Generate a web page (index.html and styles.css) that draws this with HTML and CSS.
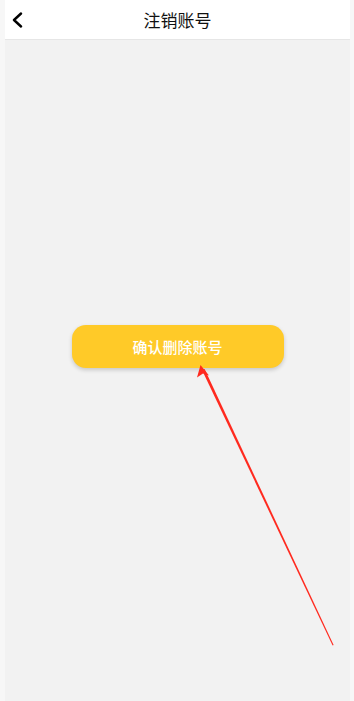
FILE: index.html
```html
<!DOCTYPE html>
<html lang="zh">
<head>
<meta charset="utf-8">
<link rel="stylesheet" href="styles.css">
</head>
<body>
<div class="frame">
  <header class="nav">
    <span class="back">
      <svg width="12" height="16" viewBox="0 0 12 16"><path d="M10 1.5 L3 8 L10 14.5" fill="none" stroke="#000" stroke-width="2.4" stroke-linecap="round" stroke-linejoin="round"/></svg>
    </span>
    <h1 class="title">注销账号</h1>
  </header>
  <main class="content">
    <button class="confirm">确认删除账号</button>
  </main>
  <svg class="arrow" width="354" height="701" viewBox="0 0 354 701">
    <polygon points="202,370 204.6,369 333.6,645 332.6,645.4" fill="#ff2a1f"/>
    <path d="M200.5 365 L197 377.5 L203 373.5 L209 375.5 Z" fill="#ff2a1f"/>
  </svg>
</div>
</body>
</html>
```
FILE: styles.css
```css
html, body {
  margin: 0;
  padding: 0;
  height: 100%;
}
body {
  background: #f7f7f7;
  font-family: "Noto Sans CJK SC", "Noto Sans", sans-serif;
}
.frame {
  margin: 0 4px 0 5px;
  height: 701px;
  background: #f2f2f2;
  display: flex;
  flex-direction: column;
}
.nav {
  height: 40px;
  background: #fff;
  border-bottom: 1px solid #e6e6e6;
  display: flex;
  align-items: center;
  justify-content: center;
  position: relative;
  box-sizing: border-box;
}
.back {
  position: absolute;
  left: 6px;
  top: 12px;
  display: flex;
}
.title {
  margin: 0;
  font-size: 17px;
  font-weight: 400;
  color: #111;
  line-height: 1;
}
.content {
  flex: 1;
  display: flex;
  justify-content: center;
  padding-top: 285px;
  align-items: flex-start;
}
.confirm {
  width: 212px;
  height: 43px;
  border: none;
  border-radius: 14px;
  background: #ffca28;
  color: #fff;
  font-family: "Noto Sans CJK SC", "Noto Sans", sans-serif;
  font-size: 15px;
  font-weight: 500;
  box-shadow: 0 2px 4px rgba(0,0,0,0.18);
}
.arrow {
  position: absolute;
  left: 0;
  top: 0;
  pointer-events: none;
}
```
